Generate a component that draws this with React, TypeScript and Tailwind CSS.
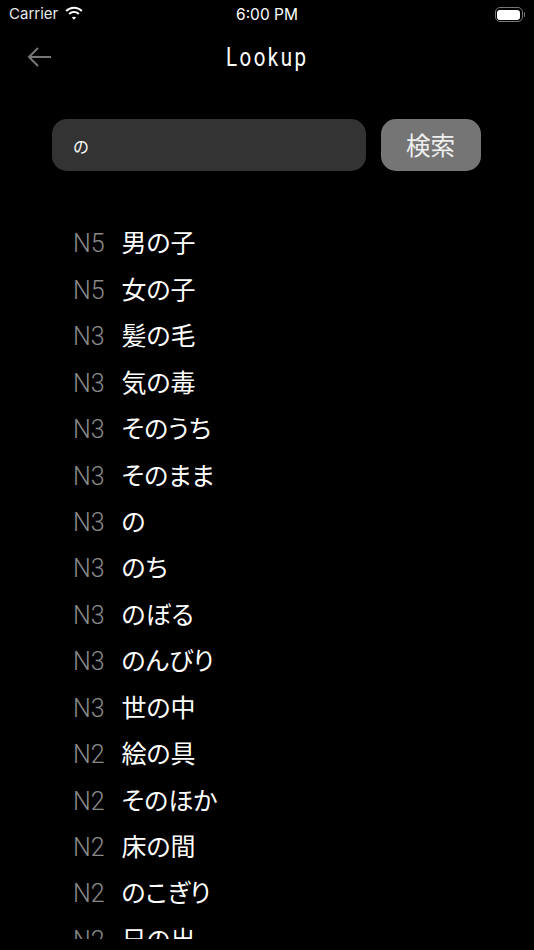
const words: [string, string][] = [
  ['N5', '男の子'],
  ['N5', '女の子'],
  ['N3', '髪の毛'],
  ['N3', '気の毒'],
  ['N3', 'そのうち'],
  ['N3', 'そのまま'],
  ['N3', 'の'],
  ['N3', 'のち'],
  ['N3', 'のぼる'],
  ['N3', 'のんびり'],
  ['N3', '世の中'],
  ['N2', '絵の具'],
  ['N2', 'そのほか'],
  ['N2', '床の間'],
  ['N2', 'のこぎり'],
  ['N2', '日の出'],
];

const jp = "font-['Noto_Sans_CJK_JP',sans-serif]";

function StatusBar() {
  return (
    <div className="flex h-7 items-center justify-between pl-[9px] pr-[9px] pt-[1px] text-white font-['Inter',sans-serif]">
      <div className="flex w-40 items-center gap-[6px] text-[15px] text-[#e8e8e8]">
        <span>Carrier</span>
        <svg width="20" height="15" viewBox="0 0 19 14" fill="white" className="mb-[2px]">
          <path d="M9.5 2.6c2.6 0 5 1 6.8 2.7l1.3-1.4A11.8 11.8 0 0 0 9.5.6 11.8 11.8 0 0 0 1.4 3.9l1.3 1.4A9.9 9.9 0 0 1 9.5 2.6Z" />
          <path d="M9.5 6.6c1.5 0 2.9.6 4 1.6l1.3-1.4a7.8 7.8 0 0 0-10.6 0l1.3 1.4c1.1-1 2.5-1.6 4-1.6Z" />
          <path d="M9.5 10c-.8 0-1.5.3-2 .8l2 2.2 2-2.2c-.5-.5-1.2-.8-2-.8Z" />
        </svg>
      </div>
      <span className="text-[15.5px] font-normal">6:00 PM</span>
      <div className="flex w-40 items-center justify-end">
        <div className="flex h-[15px] w-[28px] items-center rounded-[5px] border border-[#777] p-[1.5px]">
          <div className="h-full w-full rounded-[3px] bg-white" />
        </div>
        <div className="ml-[1px] h-[5px] w-[1.5px] rounded-r-sm bg-[#777]" />
      </div>
    </div>
  );
}

export default function App() {
  return (
    <div className="flex h-[950px] w-[534px] flex-col overflow-hidden bg-black">
      <StatusBar />
      <div className="relative flex h-[58px] items-center justify-center">
        <svg width="26" height="22" viewBox="0 0 26 22" fill="none" stroke="#777" strokeWidth="2" className="absolute left-[27px] top-[18px]">
          <path d="M24 11H2M11 2l-9 9 9 9" />
        </svg>
        <span className="scale-x-[0.82] pt-[2px] font-['Roboto',sans-serif] text-[25px] tracking-[3px] text-white">Lookup</span>
      </div>
      <div className="mt-[33px] flex gap-[15px] pl-[52px]">
        <div className={`flex h-[52px] w-[314px] items-center rounded-[15px] bg-[#333] pl-[21px] pt-[2px] text-[16px] text-white ${jp}`}>
          の
        </div>
        <div className={`flex h-[52px] w-[100px] items-center justify-center rounded-[15px] bg-[#757575] pb-[2px] pr-[1px] text-[24.6px] text-[#eee] ${jp}`}>
          検索
        </div>
      </div>
      <div className="mt-[49px] h-[719px] overflow-hidden pl-[73px]">
        {words.map(([level, word]) => (
          <div key={word} className="flex h-[46.43px] items-center">
            <span className="w-[48.5px] pt-[2px] font-['Roboto',sans-serif] text-[25px] font-light text-[#8a8a8a]">{level}</span>
            <span className={`pb-[2px] text-[25px] text-white [font-feature-settings:'palt'] ${jp}`}>{word}</span>
          </div>
        ))}
      </div>
    </div>
  );
}
